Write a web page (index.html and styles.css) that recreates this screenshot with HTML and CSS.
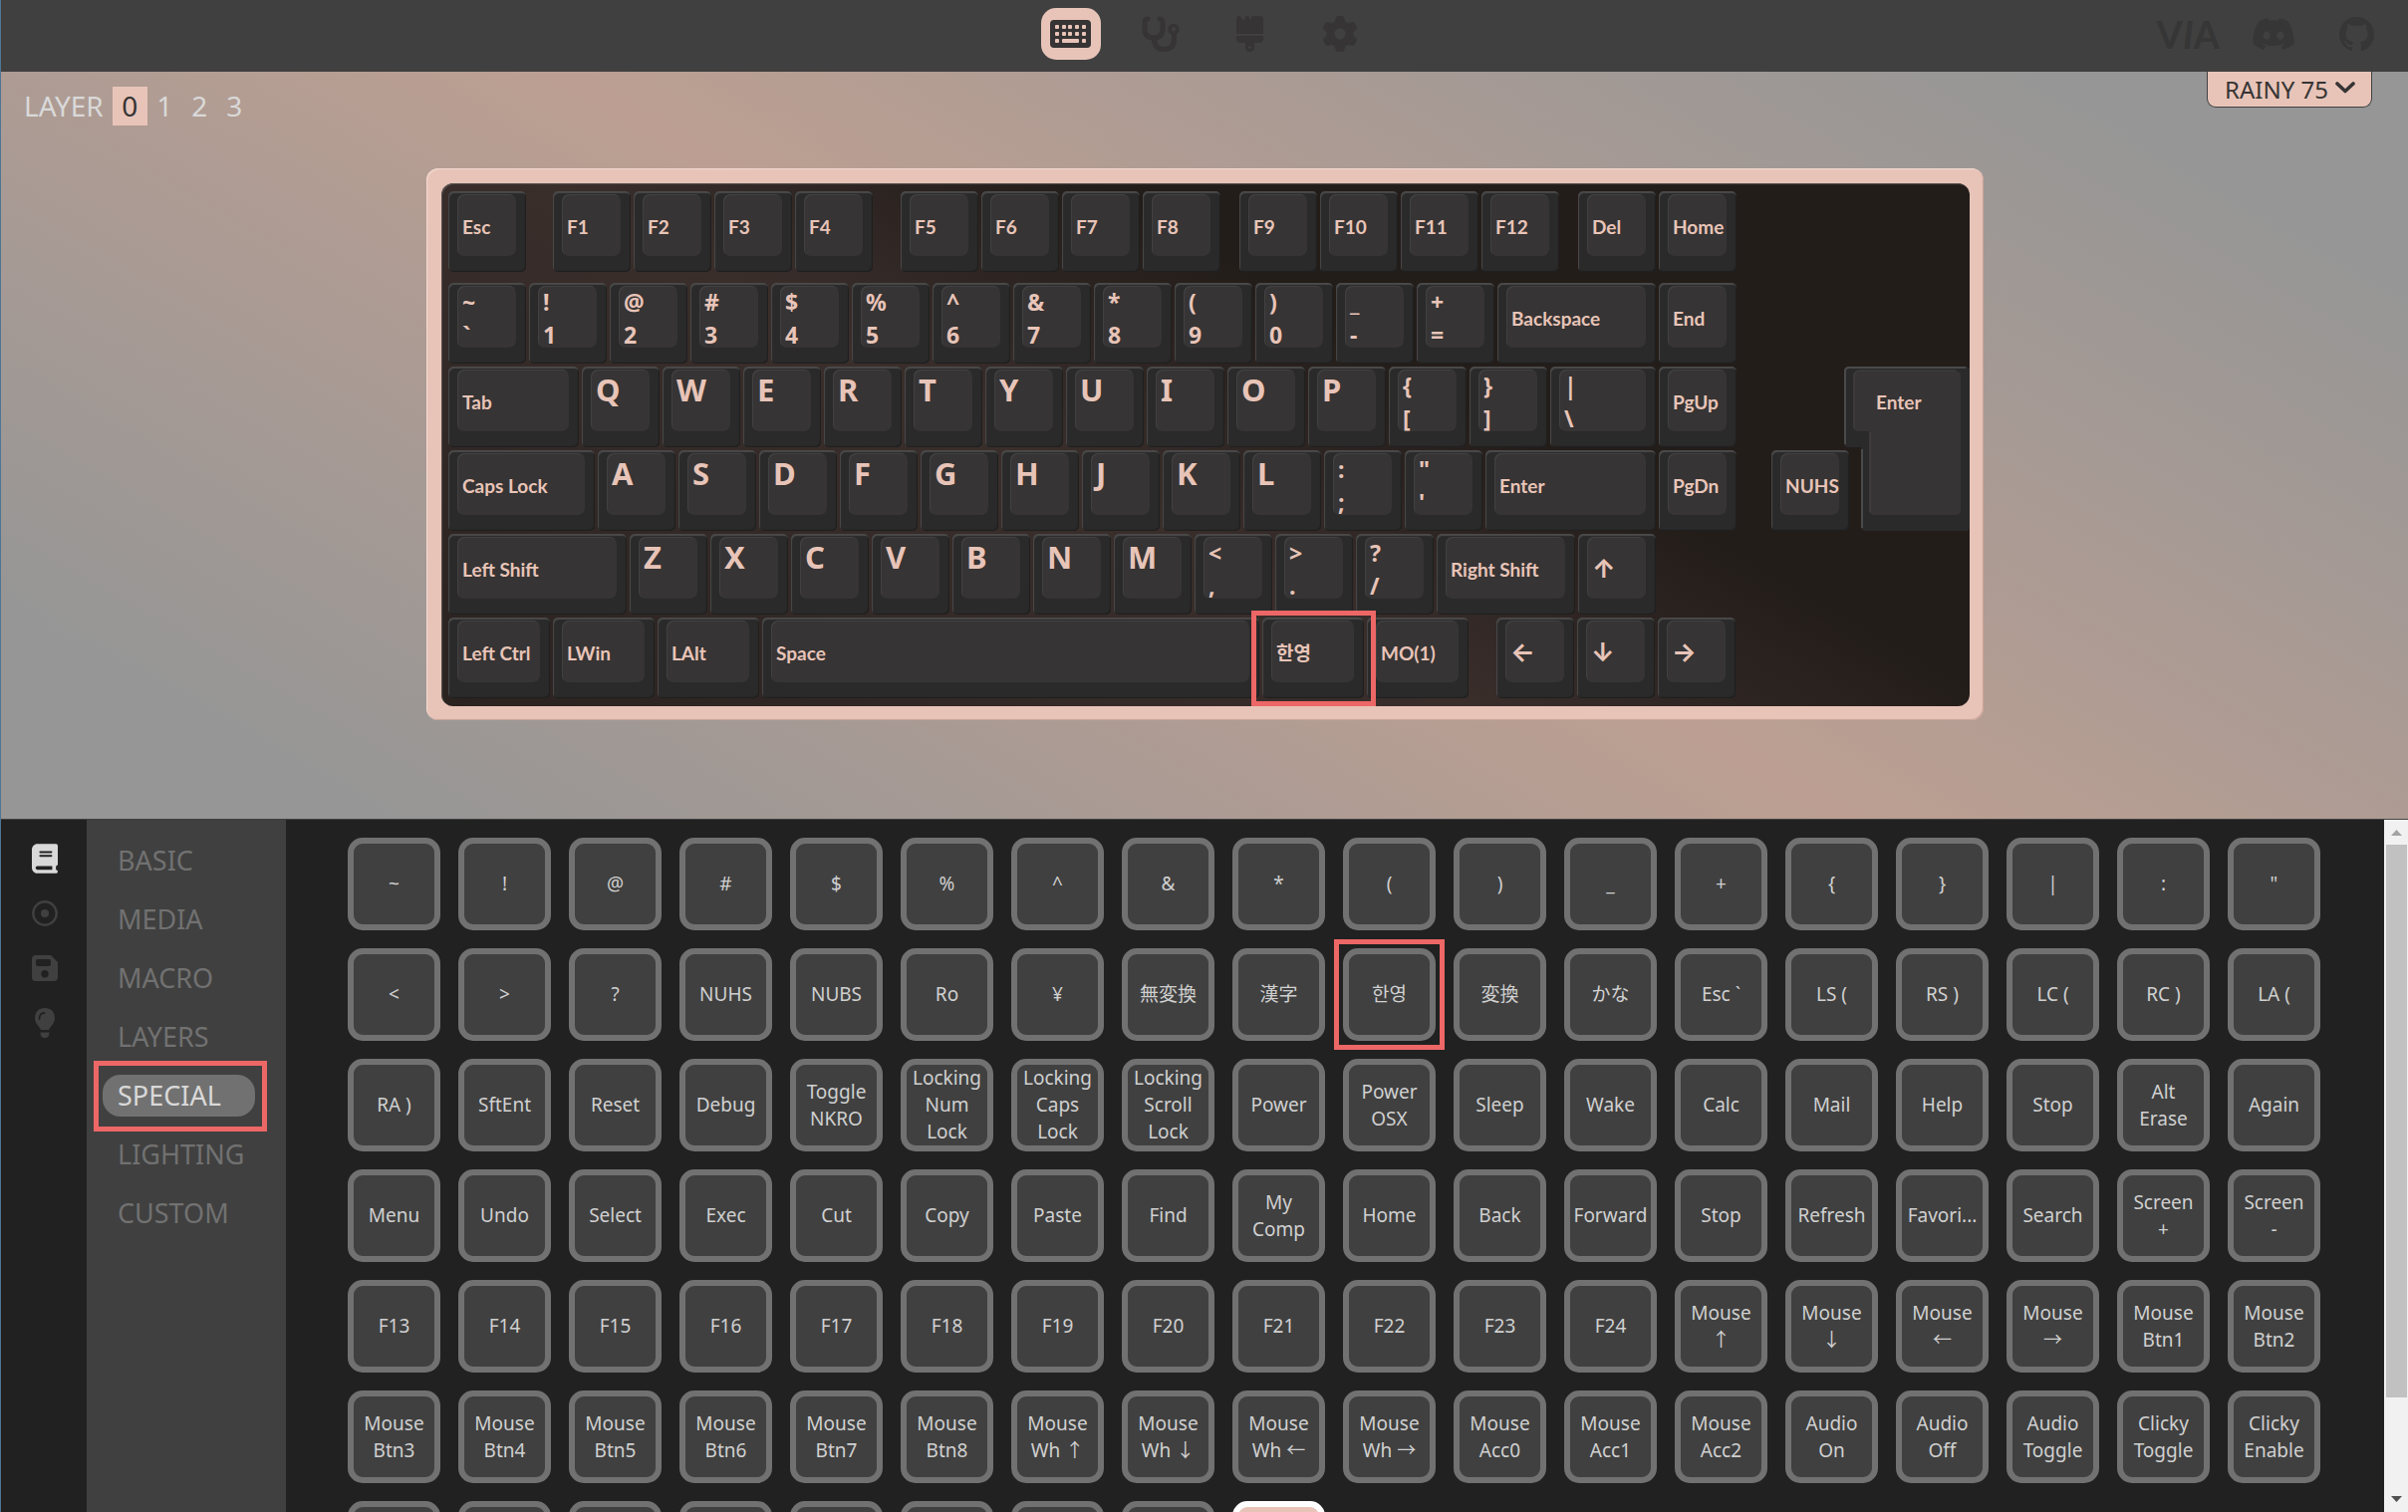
FILE: index.html
```html
<!DOCTYPE html>
<html lang="en">
<head>
    <meta charset="UTF-8">
    <meta name="viewport" content="width=device-width, initial-scale=1.0">
    <title>VIA</title>
    <link rel="stylesheet" href="styles.css">
</head>
<body>
<header class="topbar">
    <nav class="tabs">
        <button class="tab active" aria-label="Configure">
            <svg width="41" height="28" viewBox="0 0 41 28"><path fill-rule="evenodd" d="M4 0H37Q41 0 41 4V24Q41 28 37 28H4Q0 28 0 24V4Q0 0 4 0ZM6 5H8Q9 5 9 6V8Q9 9 8 9H6Q5 9 5 8V6Q5 5 6 5ZM13 5H15Q16 5 16 6V8Q16 9 15 9H13Q12 9 12 8V6Q12 5 13 5ZM19 5H21Q22 5 22 6V8Q22 9 21 9H19Q18 9 18 8V6Q18 5 19 5ZM26 5H28Q29 5 29 6V8Q29 9 28 9H26Q25 9 25 8V6Q25 5 26 5ZM33 5H35Q36 5 36 6V8Q36 9 35 9H33Q32 9 32 8V6Q32 5 33 5ZM6 12H8Q9 12 9 13V15Q9 16 8 16H6Q5 16 5 15V13Q5 12 6 12ZM13 12H15Q16 12 16 13V15Q16 16 15 16H13Q12 16 12 15V13Q12 12 13 12ZM19 12H21Q22 12 22 13V15Q22 16 21 16H19Q18 16 18 15V13Q18 12 19 12ZM26 12H28Q29 12 29 13V15Q29 16 28 16H26Q25 16 25 15V13Q25 12 26 12ZM33 12H35Q36 12 36 13V15Q36 16 35 16H33Q32 16 32 15V13Q32 12 33 12ZM6 19H8Q9 19 9 20V22Q9 23 8 23H6Q5 23 5 22V20Q5 19 6 19ZM13 19H28Q29 19 29 20V22Q29 23 28 23H13Q12 23 12 22V20Q12 19 13 19ZM33 19H35Q36 19 36 20V22Q36 23 35 23H33Q32 23 32 22V20Q32 19 33 19Z"/></svg>
        </button>
        <button class="tab" aria-label="Key tester">
            <svg width="38" height="36" viewBox="0 0 38 36"><g fill="none" stroke="currentColor" stroke-width="5" stroke-linecap="round"><path d="M6 3Q3 3 3 7V13Q3 22 12 22Q21 22 21 13V7Q21 3 18 3"/><path d="M12.500 23Q12.500 34 22.500 34Q32.500 34 32.500 23V18" transform="translate(0 -.5)"/></g><circle cx="32" cy="13.500" r="4" fill="none" stroke="currentColor" stroke-width="3.400"/></svg>
        </button>
        <button class="tab" aria-label="Design">
            <svg width="27" height="36" viewBox="0 0 27 36"><path fill-rule="evenodd" d="M3 0H4L7 5 10 0H12L14 4 16 0H24Q27 0 27 3V18H0V3Q0 0 3 0ZM0 20H27V23Q27 27 23 27H18V31.500Q18 36 13.500 36Q9 36 9 31.500V27H4Q0 27 0 23ZM13.500 30A1.500 1.500 0 1 0 13.500 33A1.500 1.500 0 1 0 13.500 30Z"/></svg>
        </button>
        <button class="tab" aria-label="Settings">
            <svg width="36" height="36" viewBox="0 0 512 512"><path d="M495.9 166.6c3.2 8.700 .5 18.400-6.400 24.600l-43.300 39.400c1.100 8.300 1.700 16.800 1.700 25.400s-.6 17.100-1.700 25.400l43.300 39.400c6.900 6.200 9.600 15.900 6.400 24.600c-4.400 11.900-9.700 23.300-15.800 34.300l-4.700 8.100c-6.600 11-14 21.400-22.100 31.200c-5.900 7.200-15.700 9.600-24.500 6.800l-55.700-17.700c-13.400 10.300-28.200 18.900-44 25.400l-12.500 57.100c-2 9.100-9 16.300-18.200 17.800c-13.800 2.300-28 3.500-42.500 3.500s-28.700-1.200-42.500-3.500c-9.200-1.500-16.200-8.700-18.200-17.800l-12.500-57.100c-15.800-6.500-30.600-15.100-44-25.400L83.100 425.900c-8.800 2.800-18.600 .3-24.500-6.800c-8.100-9.800-15.500-20.200-22.100-31.200l-4.700-8.100c-6.100-11-11.400-22.400-15.800-34.300c-3.200-8.700-.5-18.400 6.400-24.600l43.300-39.400C64.600 273.100 64 264.600 64 256s.6-17.100 1.700-25.400L22.400 191.200c-6.900-6.200-9.600-15.900-6.400-24.600c4.400-11.900 9.700-23.300 15.800-34.300l4.700-8.100c6.600-11 14-21.400 22.100-31.200c5.900-7.200 15.700-9.600 24.500-6.800l55.700 17.700c13.400-10.300 28.200-18.900 44-25.400l12.500-57.100c2-9.100 9-16.300 18.200-17.800C227.300 1.200 241.500 0 256 0s28.700 1.200 42.500 3.500c9.200 1.500 16.200 8.700 18.200 17.800l12.500 57.100c15.800 6.500 30.600 15.100 44 25.400l55.700-17.700c8.800-2.800 18.600-.3 24.500 6.800c8.100 9.800 15.500 20.200 22.100 31.200l4.700 8.100c6.100 11 11.400 22.400 15.800 34.300zM256 336a80 80 0 1 0 0-160 80 80 0 1 0 0 160z"/></svg>
        </button>
    </nav>
    <div class="links">
        <a class="logo" href="#">V<i>I</i>A</a>
        <a href="#" aria-label="Discord">
            <svg width="42" height="34" viewBox="20 24 600 464"><path d="M524.531,69.836a1.500,1.500,0,0,0-.764-.7A485.065,485.065,0,0,0,404.081,32.030a1.816,1.816,0,0,0-1.923.91,337.461,337.461,0,0,0-14.900,30.600,447.848,447.848,0,0,0-134.426,0,309.541,309.541,0,0,0-15.135-30.600,1.890,1.890,0,0,0-1.924-.91A483.689,483.689,0,0,0,116.085,69.137a1.712,1.712,0,0,0-.788.676C39.068,183.651,18.186,294.690,28.430,404.354a2.016,2.016,0,0,0,.765,1.375A487.666,487.666,0,0,0,176.020,479.918a1.900,1.900,0,0,0,2.063-.676A348.200,348.200,0,0,0,208.120,430.400a1.860,1.860,0,0,0-1.019-2.588,321.173,321.173,0,0,1-45.868-21.853,1.885,1.885,0,0,1-.185-3.126c3.082-2.309,6.166-4.711,9.109-7.137a1.819,1.819,0,0,1,1.900-.256c96.229,43.917,200.410,43.917,295.500,0a1.812,1.812,0,0,1,1.924.233c2.944,2.426,6.027,4.851,9.132,7.160a1.884,1.884,0,0,1-.162,3.126,301.407,301.407,0,0,1-45.890,21.830,1.875,1.875,0,0,0-1,2.611,391.055,391.055,0,0,0,30.014,48.815,1.864,1.864,0,0,0,2.063.7A486.048,486.048,0,0,0,610.700,405.729a1.882,1.882,0,0,0,.765-1.352C623.729,277.594,590.933,167.465,524.531,69.836ZM222.491,337.580c-28.972,0-52.844-26.587-52.844-59.239S193.056,219.100,222.491,219.100c29.665,0,53.306,26.820,52.843,59.239C275.334,310.993,251.924,337.580,222.491,337.580Zm195.380,0c-28.971,0-52.843-26.587-52.843-59.239S388.437,219.100,417.871,219.100c29.667,0,53.307,26.820,52.844,59.239C470.715,310.993,447.538,337.580,417.871,337.580Z"/></svg>
        </a>
        <a href="#" aria-label="GitHub">
            <svg width="35" height="35" viewBox="0 0 16 16"><path d="M8 0C3.580 0 0 3.580 0 8c0 3.540 2.290 6.530 5.470 7.590.4.070.55-.17.55-.38 0-.19-.01-.82-.01-1.490-2.010.37-2.530-.49-2.690-.94-.09-.23-.48-.94-.82-1.130-.28-.15-.68-.52-.01-.53.630-.01 1.080.58 1.230.82.720 1.210 1.870.87 2.330.66.070-.52.280-.87.510-1.070-1.780-.2-3.640-.89-3.640-3.950 0-.87.310-1.590.820-2.150-.08-.2-.36-1.020.080-2.120 0 0 .67-.21 2.200.82.640-.18 1.320-.27 2-.27s1.360.09 2 .27c1.530-1.040 2.200-.82 2.200-.82.440 1.100.160 1.920.080 2.120.510.56.820 1.270.820 2.150 0 3.070-1.870 3.750-3.650 3.950.290.25.540.73.540 1.480 0 1.070-.01 1.930-.01 2.200 0 .21.150.46.550.38A8.010 8.010 0 0 0 16 8c0-4.420-3.580-8-8-8z"/></svg>
        </a>
    </div>
</header>

<main class="stage">
    <div class="stage-bar">
        <div class="layers">
            <span class="layers-label">LAYER</span>
            <button class="layer active">0</button>
            <button class="layer">1</button>
            <button class="layer">2</button>
            <button class="layer">3</button>
        </div>
        <div class="device">
            <select aria-label="Keyboard">
                <option>RAINY 75</option>
            </select>
            <svg class="chevron" width="20" height="12" viewBox="0 0 20 12"><path d="M2 2L10 9.500 18 2" fill="none" stroke="currentColor" stroke-width="3.600" stroke-linecap="round" stroke-linejoin="round"/></svg>
        </div>
    </div>
    <div class="case">
        <div class="well" id="keyboard"></div>
    </div>
</main>

<section class="panel">
    <nav class="rail">
        <button class="active" aria-label="Keymap">
            <svg width="26" height="30" viewBox="0 0 448 512"><path d="M96 0C43 0 0 43 0 96V416c0 53 43 96 96 96H384h32c17.700 0 32-14.300 32-32s-14.300-32-32-32V384c17.700 0 32-14.300 32-32V32c0-17.700-14.300-32-32-32H384 96zm0 384H352v64H96c-17.700 0-32-14.300-32-32s14.300-32 32-32zm32-240c0-8.800 7.200-16 16-16H336c8.800 0 16 7.200 16 16s-7.200 16-16 16H144c-8.800 0-16-7.200-16-16zm16 48H336c8.800 0 16 7.200 16 16s-7.200 16-16 16H144c-8.800 0-16-7.200-16-16s7.200-16 16-16z"/></svg>
        </button>
        <button aria-label="Macros">
            <svg width="26" height="26" viewBox="0 0 26 26"><circle cx="13" cy="13" r="11.700" fill="none" stroke="currentColor" stroke-width="2.400"/><circle cx="13" cy="13" r="4"/></svg>
        </button>
        <button aria-label="Save and load">
            <svg width="26" height="26" viewBox="0 0 26 26"><path fill-rule="evenodd" d="M4 0H19L26 7V22Q26 26 22 26H4Q0 26 0 22V4Q0 0 4 0ZM6 4Q4 4 4 6V9Q4 11 6 11H17Q19 11 19 9V6Q19 4 17 4ZM13 15A3.700 3.700 0 1 0 13 22.400A3.700 3.700 0 1 0 13 15Z"/></svg>
        </button>
        <button aria-label="Lighting">
            <svg width="22" height="30" viewBox="0 0 22 30"><path d="M11 0Q21 0 21 11Q21 14 18 17.500Q15.500 20.500 15 22H7Q6.500 20.500 4 17.500Q1 14 1 11Q1 0 11 0ZM6.500 24.500H15.500Q15.500 30 11 30Q6.500 30 6.500 24.500Z"/><path d="M5.500 11Q5.500 5 10.500 5" fill="none" stroke="#212121" stroke-width="1.800" stroke-linecap="round"/></svg>
        </button>
    </nav>
    <nav class="menu">
        <button>BASIC</button>
        <button>MEDIA</button>
        <button>MACRO</button>
        <button>LAYERS</button>
        <button class="active marked">SPECIAL</button>
        <button>LIGHTING</button>
        <button>CUSTOM</button>
    </nav>
    <div class="keycodes" id="keycodes"></div>
    <div class="scrollbar">
        <svg width="24" height="25" viewBox="0 0 24 25"><path d="M7 16L12.500 10 18 16Z" fill="#a3a3a3"/></svg>
        <div class="track"><div class="thumb"></div></div>
        <svg width="24" height="25" viewBox="0 0 24 25"><path d="M7 9L12.500 15 18 9Z" fill="#505050"/></svg>
    </div>
</section>

<script>
    // width classes: w130 = 1.30 units; a number is an empty space in px
    const rows = [
        ['Esc', 21, 'F1', 'F2', 'F3', 'F4', 22, 'F5', 'F6', 'F7', 'F8', 13, 'F9', 'F10', 'F11', 'F12', 13, 'Del', 'Home'],
        ['~\n`', '!\n1', '@\n2', '#\n3', '$\n4', '%\n5', '^\n6', '&\n7', '*\n8', '(\n9', ')\n0', '_\n-', '+\n=', ['Backspace', 'w200'], 'End'],
        [['Tab', 'w165'], 'Q', 'W', 'E', 'R', 'T', 'Y', 'U', 'I', 'O', 'P', '{\n[', '}\n]', ['|\n\\', 'w135'], 'PgUp', 102, ['Enter', 'iso']],
        [['Caps Lock', 'w185'], 'A', 'S', 'D', 'F', 'G', 'H', 'J', 'K', 'L', ':\n;', '"\n\'', ['Enter', 'w215'], 'PgDn', 29, 'NUHS'],
        [['Left Shift', 'w225'], 'Z', 'X', 'C', 'V', 'B', 'N', 'M', '<\n,', '>\n.', '?\n/', ['Right Shift', 'w175'], '↑'],
        [['Left Ctrl', 'w130'], ['LWin', 'w130'], ['LAlt', 'w130'], ['Space', 'w620'], ['한영', 'w130 marked'], ['MO(1)', 'w130'], 22, '←', '↓', '→']
    ];

    const isoShape = `
        <svg class="iso-shape" width="126" height="165" viewBox="0 0 126 165">
            <path d="M4 0H122Q126 0 126 4V161Q126 165 122 165H21Q17 165 17 161V81H4Q0 81 0 77V4Q0 0 4 0Z" fill="#2a2a2a"/>
            <path d="M1 78V5Q1 1 5 1H122M18 162V83" fill="none" stroke="#4b4a4a" stroke-width="2"/>
            <path d="M15 4H111Q117 4 117 10V144Q117 149 111 149H31Q25 149 25 144V65H15Q9 65 9 59V10Q9 4 15 4Z" fill="#363434"/>
            <path d="M10 62V10Q10 4 16 4H112M26 146V66" fill="none" stroke="#444343" stroke-width="1"/>
        </svg>`;

    const keycodes = [
        '~', '!', '@', '#', '$', '%', '^', '&', '*', '(', ')', '_', '+', '{', '}', '|', ':', '"',
        '<', '>', '?', 'NUHS', 'NUBS', 'Ro', '¥', '無変換', '漢字', '한영', '変換', 'かな', 'Esc `', 'LS (', 'RS )', 'LC (', 'RC )', 'LA (',
        'RA )', 'SftEnt', 'Reset', 'Debug', 'Toggle\nNKRO', 'Locking\nNum\nLock', 'Locking\nCaps\nLock', 'Locking\nScroll\nLock', 'Power', 'Power\nOSX', 'Sleep', 'Wake', 'Calc', 'Mail', 'Help', 'Stop', 'Alt\nErase', 'Again',
        'Menu', 'Undo', 'Select', 'Exec', 'Cut', 'Copy', 'Paste', 'Find', 'My\nComp', 'Home', 'Back', 'Forward', 'Stop', 'Refresh', 'Favori...', 'Search', 'Screen\n+', 'Screen\n-',
        'F13', 'F14', 'F15', 'F16', 'F17', 'F18', 'F19', 'F20', 'F21', 'F22', 'F23', 'F24', 'Mouse\n↑', 'Mouse\n↓', 'Mouse\n←', 'Mouse\n→', 'Mouse\nBtn1', 'Mouse\nBtn2',
        'Mouse\nBtn3', 'Mouse\nBtn4', 'Mouse\nBtn5', 'Mouse\nBtn6', 'Mouse\nBtn7', 'Mouse\nBtn8', 'Mouse\nWh ↑', 'Mouse\nWh ↓', 'Mouse\nWh ←', 'Mouse\nWh →', 'Mouse\nAcc0', 'Mouse\nAcc1', 'Mouse\nAcc2', 'Audio\nOn', 'Audio\nOff', 'Audio\nToggle', 'Clicky\nToggle', 'Clicky\nEnable',
        '', '', '', '', '', '', '', ''
    ];

    function legendClass(label) {
        if (label.includes('\n')) return 'double';
        if ('←↑→↓'.includes(label)) return 'arrow';
        if (label.length === 1) return 'letter';
        return 'word';
    }

    function makeKey(item) {
        const [label, size] = Array.isArray(item) ? item : [item, ''];
        const key = document.createElement('button');
        key.className = `key ${size}`;
        if (size === 'iso') key.innerHTML = isoShape;
        const cap = document.createElement('span');
        cap.className = `cap ${legendClass(label)}`;
        cap.textContent = label;
        key.appendChild(cap);
        return key;
    }

    const keyboard = document.getElementById('keyboard');
    rows.forEach((items) => {
        const row = document.createElement('div');
        row.className = 'row';
        items.forEach((item) => {
            if (typeof item === 'number') {
                const space = document.createElement('div');
                space.style.width = item + 'px';
                row.appendChild(space);
            } else {
                row.appendChild(makeKey(item));
            }
        });
        keyboard.appendChild(row);
    });

    const list = document.getElementById('keycodes');
    keycodes.forEach((label) => {
        const btn = document.createElement('button');
        btn.className = 'keycode';
        btn.textContent = label;
        if (label === '한영') btn.classList.add('marked');
        list.appendChild(btn);
    });
    const any = document.createElement('button');
    any.className = 'keycode custom';
    list.appendChild(any);
</script>
</body>
</html>
```

FILE: styles.css
```css
* {
    box-sizing: border-box;
}

:root {
    --accent: #e8c4b8;
    --dark: #363434;
    --control: #404040;
    --border: #717171;
    --label: #d9d9d9;
}

body {
    margin: 0;
    height: 100vh;
    display: flex;
    flex-direction: column;
    overflow: hidden;
    border-left: 1px solid #4f7594;
    background: #212121;
    font-family: "Noto Sans", "Noto Sans CJK KR", sans-serif;
}

button, select {
    font-family: inherit;
    border: none;
    padding: 0;
    margin: 0;
    background: none;
    cursor: pointer;
}

svg {
    display: block;
    fill: currentColor;
}

/* top bar */
.topbar {
    flex: none;
    height: 72px;
    display: grid;
    grid-template-columns: 1fr auto 1fr;
    align-items: start;
    padding: 8px 0 0 1px;
    background: var(--control);
}

.tabs {
    grid-column: 2;
    display: flex;
    gap: 30px;
}

.tab {
    width: 60px;
    height: 52px;
    display: flex;
    align-items: center;
    justify-content: center;
    border-radius: 15px;
    color: var(--dark);
}

.tab.active {
    background: var(--accent);
}

.links {
    display: flex;
    justify-content: flex-end;
    align-items: center;
    height: 52px;
    gap: 45px;
    padding-right: 34px;
}

.links a {
    color: #363636;
    text-decoration: none;
}

.links .logo {
    margin-right: -12px;
    font: bold 38px/52px Lato, sans-serif;
}

/* keyboard stage */
.stage {
    flex: none;
    padding: 0 0 99px 1px;
    background: linear-gradient(30deg, #969696 10%, #bc9f92 50%, #969696 90%);
}

.stage-bar {
    display: flex;
    justify-content: space-between;
    align-items: flex-start;
    padding: 0 36px 0 22px;
    margin-bottom: 43px;
}

.layers {
    display: flex;
    align-items: center;
    padding-top: 15px;
    font-size: 28px;
    line-height: 39px;
    color: var(--label);
}

.layers-label {
    margin-right: 9px;
}

.layer {
    width: 35px;
    height: 39px;
    font-size: 28px;
    line-height: 39px;
    color: var(--label);
}

.layer.active {
    background: var(--accent);
    color: var(--dark);
}

.device {
    position: relative;
    color: var(--dark);
}

.device select {
    appearance: none;
    height: 36px;
    padding: 0 43px 0 17px;
    border: 1px solid var(--control);
    border-top: none;
    border-radius: 0 0 9px 9px;
    background: var(--accent);
    color: var(--dark);
    font-size: 24px;
    line-height: 34px;
}

.chevron {
    position: absolute;
    right: 17px;
    top: 10px;
    pointer-events: none;
}

.case {
    width: fit-content;
    margin: 0 auto;
    padding: 15px 14px 14px 15px;
    border-radius: 12px;
    background: var(--accent);
    box-shadow: inset 1px 1px 1px #f3dcd4, inset -1px -1px 1px #c9a297;
}

.well {
    padding: 8px 0 8px 7px;
    border-radius: 12px;
    background: linear-gradient(30deg, #2a2320 0%, #3a2e2b 42%, #231d1a 64%);
    box-shadow: inset 1px 1px 1px #5a5553;
}

.row {
    display: flex;
    gap: 3px;
    margin-bottom: 3px;
}

.row:first-child {
    margin-bottom: 11px;
}

.row:last-child {
    margin-bottom: 0;
}

.key {
    position: relative;
    flex: none;
    width: 78px;
    height: 81px;
    padding: 3px 10px 16px 9px;
    border-radius: 5px;
    background: #2a2a2a;
    box-shadow: inset 1px 2px 1px #4b4a4a, inset -1px -1px 1px #1f1f1f;
    color: var(--accent);
    text-align: left;
}

.w130 { width: 102px; }
.w135 { width: 106px; }
.w165 { width: 131px; }
.w175 { width: 139px; }
.w185 { width: 147px; }
.w200 { width: 159px; }
.w215 { width: 171px; }
.w225 { width: 179px; }
.w620 { width: 499px; }

.cap {
    display: block;
    height: 62px;
    padding-left: 5px;
    border-radius: 7px;
    background: var(--dark);
    box-shadow: inset 1px 1px 1px #444343;
    font-weight: bold;
    white-space: pre;
}

.word {
    font-family: Lato, "Noto Sans CJK KR", sans-serif;
    font-size: 19px;
    line-height: 66px;
}

.letter {
    font-size: 31px;
    line-height: 40px;
}

.double {
    font-size: 23px;
    line-height: 33px;
}

.arrow {
    font-family: Inter, sans-serif;
    font-size: 26px;
    line-height: 64px;
}

.iso {
    width: 126px;
    background: none;
    box-shadow: none;
}

.iso-shape {
    position: absolute;
    left: 0;
    top: 0;
}

.iso .cap {
    position: relative;
    padding-left: 23px;
    background: none;
    box-shadow: none;
}

/* callout box around a control */
.marked {
    position: relative;
    z-index: 1;
}

.marked::after {
    content: "";
    position: absolute;
    inset: -7px -12px -8px -11px;
    border: 5px solid #ec6766;
}

/* bottom panel */
.panel {
    flex: 1;
    min-height: 0;
    display: flex;
    border-top: 1px solid var(--control);
}

.rail {
    flex: none;
    width: 86px;
    display: flex;
    flex-direction: column;
    align-items: center;
    gap: 25px;
    padding: 24px 0 0 2px;
    color: var(--control);
}

.rail button {
    width: 30px;
    height: 30px;
    display: flex;
    align-items: center;
    justify-content: center;
    color: inherit;
}

.rail .active {
    color: var(--label);
}

.menu {
    flex: none;
    width: 200px;
    display: flex;
    flex-direction: column;
    gap: 17px;
    padding: 20px 31px 0 16px;
    background: var(--control);
}

.menu button {
    flex: none;
    height: 42px;
    padding-left: 15px;
    border-radius: 18px;
    color: var(--border);
    font-size: 27px;
    line-height: 42px;
    text-align: left;
}

.menu .active {
    background: var(--border);
    color: var(--label);
}

.menu .marked::after {
    inset: -14px -12px -15px -9px;
}

.keycodes {
    flex: 1;
    display: grid;
    grid-template-columns: repeat(auto-fill, 93px);
    grid-auto-rows: 93px;
    gap: 18px;
    justify-content: center;
    padding: 18px 20px 0 18px;
    overflow: hidden;
}

.keycode {
    border: 6px solid var(--border);
    border-radius: 15px;
    background: var(--control);
    color: #d0d0d0;
    font-size: 19px;
    line-height: 27px;
    white-space: pre;
    display: flex;
    align-items: center;
    justify-content: center;
    text-align: center;
}

.keycode.marked::after {
    inset: -15px;
}

.keycode.custom {
    border-color: #fff;
    background: var(--accent);
}

.scrollbar {
    flex: none;
    width: 24px;
    display: flex;
    flex-direction: column;
    background: #f1f1f1;
}

.track {
    flex: 1;
    padding: 0 1px 0 2px;
}

.thumb {
    height: 86%;
    background: #c1c1c1;
}
```
